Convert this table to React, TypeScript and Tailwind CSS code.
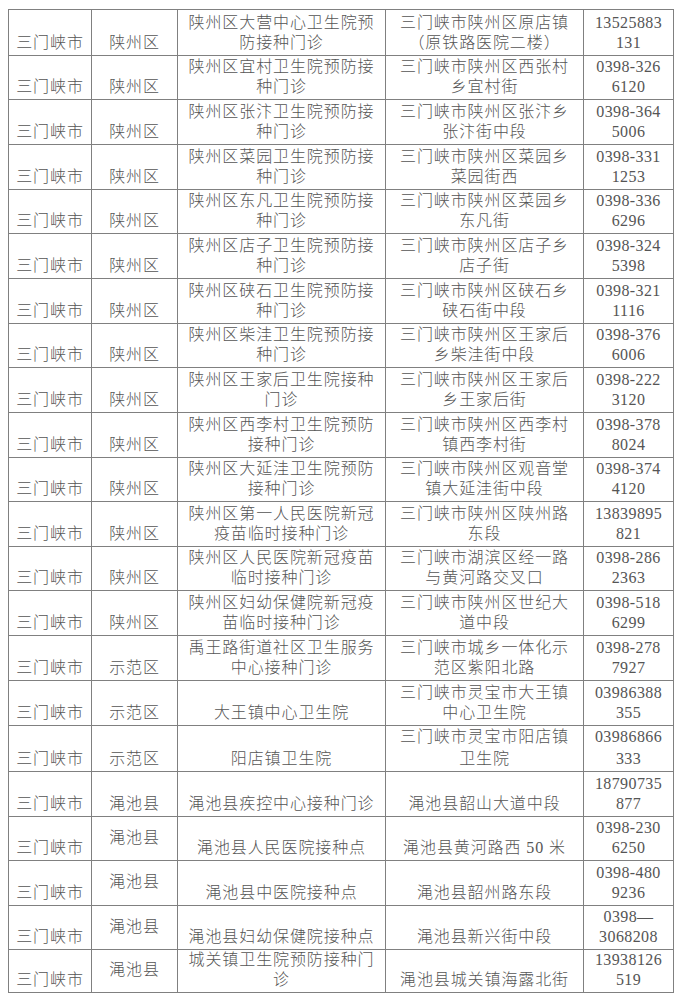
import React from 'react';

type Row = {
  h: string;
  district: string;
  midDistrict?: boolean;
  name: string[];
  addr: string[];
  phone: string[];
  loose?: boolean;
};

const rows: Row[] = [
  { h: 'h-[46px]', district: '陕州区', name: ['陕州区大营中心卫生院预', '防接种门诊'], addr: ['三门峡市陕州区原店镇', '（原铁路医院二楼）'], phone: ['13525883', '131'] },
  { h: 'h-[44px]', district: '陕州区', name: ['陕州区宜村卫生院预防接', '种门诊'], addr: ['三门峡市陕州区西张村', '乡宜村街'], phone: ['0398-326', '6120'] },
  { h: 'h-[45px]', district: '陕州区', name: ['陕州区张汴卫生院预防接', '种门诊'], addr: ['三门峡市陕州区张汴乡', '张汴街中段'], phone: ['0398-364', '5006'] },
  { h: 'h-[45px]', district: '陕州区', name: ['陕州区菜园卫生院预防接', '种门诊'], addr: ['三门峡市陕州区菜园乡', '菜园街西'], phone: ['0398-331', '1253'] },
  { h: 'h-[44px]', district: '陕州区', name: ['陕州区东凡卫生院预防接', '种门诊'], addr: ['三门峡市陕州区菜园乡', '东凡街'], phone: ['0398-336', '6296'] },
  { h: 'h-[45px]', district: '陕州区', name: ['陕州区店子卫生院预防接', '种门诊'], addr: ['三门峡市陕州区店子乡', '店子街'], phone: ['0398-324', '5398'] },
  { h: 'h-[45px]', district: '陕州区', name: ['陕州区硖石卫生院预防接', '种门诊'], addr: ['三门峡市陕州区硖石乡', '硖石街中段'], phone: ['0398-321', '1116'] },
  { h: 'h-[44px]', district: '陕州区', name: ['陕州区柴洼卫生院预防接', '种门诊'], addr: ['三门峡市陕州区王家后', '乡柴洼街中段'], phone: ['0398-376', '6006'] },
  { h: 'h-[45px]', district: '陕州区', name: ['陕州区王家后卫生院接种', '门诊'], addr: ['三门峡市陕州区王家后', '乡王家后街'], phone: ['0398-222', '3120'] },
  { h: 'h-[45px]', district: '陕州区', name: ['陕州区西李村卫生院预防', '接种门诊'], addr: ['三门峡市陕州区西李村', '镇西李村街'], phone: ['0398-378', '8024'] },
  { h: 'h-[44px]', district: '陕州区', name: ['陕州区大延洼卫生院预防', '接种门诊'], addr: ['三门峡市陕州区观音堂', '镇大延洼街中段'], phone: ['0398-374', '4120'] },
  { h: 'h-[45px]', district: '陕州区', name: ['陕州区第一人民医院新冠', '疫苗临时接种门诊'], addr: ['三门峡市陕州区陕州路', '东段'], phone: ['13839895', '821'] },
  { h: 'h-[44px]', district: '陕州区', name: ['陕州区人民医院新冠疫苗', '临时接种门诊'], addr: ['三门峡市湖滨区经一路', '与黄河路交叉口'], phone: ['0398-286', '2363'] },
  { h: 'h-[45px]', district: '陕州区', name: ['陕州区妇幼保健院新冠疫', '苗临时接种门诊'], addr: ['三门峡市陕州区世纪大', '道中段'], phone: ['0398-518', '6299'] },
  { h: 'h-[45px]', district: '示范区', name: ['禹王路街道社区卫生服务', '中心接种门诊'], addr: ['三门峡市城乡一体化示', '范区紫阳北路'], phone: ['0398-278', '7927'] },
  { h: 'h-[45px]', district: '示范区', name: ['大王镇中心卫生院'], addr: ['三门峡市灵宝市大王镇', '中心卫生院'], phone: ['03986388', '355'] },
  { h: 'h-[46px]', district: '示范区', name: ['阳店镇卫生院'], addr: ['三门峡市灵宝市阳店镇', '卫生院'], phone: ['03986866', '333'], loose: true },
  { h: 'h-[45px]', district: '渑池县', name: ['渑池县疾控中心接种门诊'], addr: ['渑池县韶山大道中段'], phone: ['18790735', '877'] },
  { h: 'h-[44px]', district: '渑池县', midDistrict: true, name: ['渑池县人民医院接种点'], addr: ['渑池县黄河路西 50 米'], phone: ['0398-230', '6250'] },
  { h: 'h-[45px]', district: '渑池县', midDistrict: true, name: ['渑池县中医院接种点'], addr: ['渑池县韶州路东段'], phone: ['0398-480', '9236'] },
  { h: 'h-[44px]', district: '渑池县', midDistrict: true, name: ['渑池县妇幼保健院接种点'], addr: ['渑池县新兴街中段'], phone: ['0398—', '3068208'] },
  { h: 'h-[43px]', district: '渑池县', midDistrict: true, name: ['城关镇卫生院预防接种门', '诊'], addr: ['渑池县城关镇海露北街'], phone: ['13938126', '519'] },
];

const Cell = ({ lines, mid, cjk = true, loose }: { lines: string[]; mid?: boolean; cjk?: boolean; loose?: boolean }) => (
  <div
    className={`flex flex-col border-r border-b border-[#808080] ${mid ? 'justify-center' : 'justify-end'} ${loose ? 'pb-[1px] leading-[22px]' : 'pb-[2px] leading-[20px]'}`}
  >
    {lines.map((l, i) => (
      <div key={i} className={`text-center whitespace-nowrap ${cjk ? 'tracking-[0.9px]' : 'tracking-[0.4px]'}`}>
        {l}
      </div>
    ))}
  </div>
);

export default function App() {
  return (
    <div className="min-h-screen bg-white pt-[9px] pl-[8px]">
      <div
        className="w-[666px] border-l border-t border-[#808080] text-[16px] font-light text-[#555555]"
        style={{ fontFamily: '"Liberation Serif", "Noto Sans CJK SC", serif' }}
      >
        {rows.map((r, i) => (
          <div key={i} className={`grid grid-cols-[83px_86px_208px_198px_90px] ${r.h}`}>
            <Cell lines={['三门峡市']} loose={r.loose} />
            <Cell lines={[r.district]} mid={r.midDistrict} loose={r.loose} />
            <Cell lines={r.name} loose={r.loose} />
            <Cell lines={r.addr} loose={r.loose} />
            <Cell lines={r.phone} cjk={false} loose={r.loose} />
          </div>
        ))}
      </div>
    </div>
  );
}
